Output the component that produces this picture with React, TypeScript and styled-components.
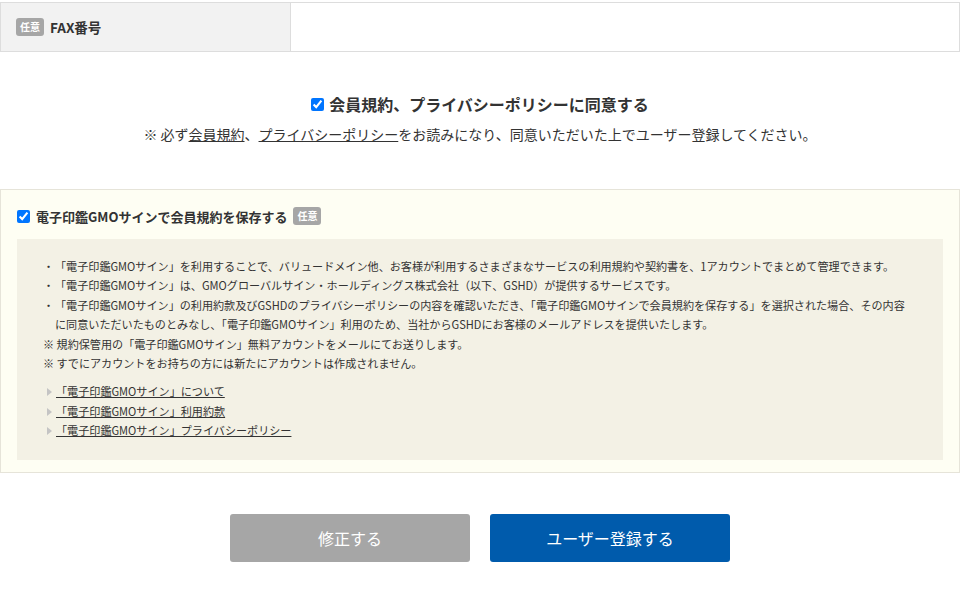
import * as React from "react";
import styled, { createGlobalStyle } from "styled-components";

const GlobalStyle = createGlobalStyle`
  body {
    margin: 0;
    background: #fff;
    color: #333;
    font-family: "Noto Sans CJK JP", "Noto Sans", sans-serif;
  }
  * { box-sizing: border-box; }
`;

const Page = styled.div`
  width: 960px;
  padding-top: 2px;
`;

const FormTable = styled.div`
  display: grid;
  grid-template-columns: 290px 1fr;
  border: 1px solid #ddd;
`;

const LabelCell = styled.div`
  display: flex;
  align-items: center;
  gap: 6px;
  height: 48px;
  padding: 0 15px;
  background: #f2f2f2;
  border-right: 1px solid #ddd;
  font-size: 13.5px;
  font-weight: 700;
`;

const ValueCell = styled.div`
  background: #fff;
`;

const Badge = styled.span`
  display: inline-flex;
  align-items: center;
  justify-content: center;
  height: 18px;
  padding: 0 4px;
  border-radius: 3px;
  background: #a6a6a6;
  color: #fff;
  font-size: 10px;
  font-weight: 700;
  line-height: 1;
`;

const Agreement = styled.div`
  display: flex;
  flex-direction: column;
  align-items: center;
  padding-top: 40px;
`;

const AgreeLabel = styled.label`
  display: flex;
  align-items: center;
  gap: 3px;
  font-size: 16px;
  font-weight: 700;
  line-height: 24px;
`;

const Check = styled.input`
  width: 13px;
  height: 13px;
  margin: 0 2px 0 0;
  accent-color: #0075ff;
`;

const Note = styled.p`
  margin: 8px 0 0;
  font-size: 14px;
  line-height: 20px;

  a {
    color: #333;
    text-decoration: underline;
  }
`;

const SignBox = styled.div`
  margin-top: 45px;
  padding: 14px 16px 12px;
  background: #fefef3;
  border: 1px solid #e6e4d9;
`;

const SignLabel = styled.label`
  display: flex;
  align-items: center;
  gap: 4px;
  height: 24px;
  font-size: 13px;
  font-weight: 700;

  ${Badge} {
    margin-left: 2px;
  }
`;

const InfoPanel = styled.div`
  margin-top: 11px;
  padding: 18px 34px 19px 26px;
  background: #f3f1e5;
  font-size: 11.1px;
  line-height: 19.4px;
`;

const BulletList = styled.ul`
  list-style: none;
  margin: 0;
  padding: 0;
`;

const Bullet = styled.li`
  padding-left: 12px;
  text-indent: -12px;

  &::before {
    content: "・";
    display: inline-block;
    width: 12px;
    text-indent: 0;
  }
`;

const Remark = styled.p`
  margin: 0;
`;

const LinkList = styled.ul`
  list-style: none;
  margin: 9px 0 0;
  padding: 0;
`;

const LinkItem = styled.li`
  display: flex;
  align-items: center;
  padding-left: 4px;

  &::before {
    content: "";
    width: 0;
    height: 0;
    margin-right: 4px;
    border-top: 4px solid transparent;
    border-bottom: 4px solid transparent;
    border-left: 5px solid #c4c4c4;
  }

  a {
    color: #333;
    text-decoration: underline;
  }
`;

const Actions = styled.div`
  display: flex;
  justify-content: center;
  gap: 20px;
  margin-top: 41px;
`;

const ActionButton = styled.button<{ $variant: "back" | "submit" }>`
  width: 240px;
  height: 48px;
  border: none;
  border-radius: 3px;
  background: ${({ $variant }) => ($variant === "submit" ? "#005bac" : "#a6a6a6")};
  color: #fff;
  font-family: inherit;
  font-size: 16px;
  cursor: pointer;
`;

const links = [
  "「電子印鑑GMOサイン」について",
  "「電子印鑑GMOサイン」利用約款",
  "「電子印鑑GMOサイン」プライバシーポリシー",
];

export default function App() {
  return (
    <Page>
      <GlobalStyle />
      <FormTable>
        <LabelCell>
          <Badge>任意</Badge>
          FAX番号
        </LabelCell>
        <ValueCell />
      </FormTable>

      <Agreement>
        <AgreeLabel>
          <Check type="checkbox" defaultChecked />
          会員規約、プライバシーポリシーに同意する
        </AgreeLabel>
        <Note>
          ※ 必ず<a href="#">会員規約</a>、<a href="#">プライバシーポリシー</a>
          をお読みになり、同意いただいた上でユーザー登録してください。
        </Note>
      </Agreement>

      <SignBox>
        <SignLabel>
          <Check type="checkbox" defaultChecked />
          電子印鑑GMOサインで会員規約を保存する
          <Badge>任意</Badge>
        </SignLabel>
        <InfoPanel>
          <BulletList>
            <Bullet>
              「電子印鑑GMOサイン」を利用することで、バリュードメイン他、お客様が利用するさまざまなサービスの利用規約や契約書を、1アカウントでまとめて管理できます。
            </Bullet>
            <Bullet>
              「電子印鑑GMOサイン」は、GMOグローバルサイン・ホールディングス株式会社（以下、GSHD）が提供するサービスです。
            </Bullet>
            <Bullet>
              「電子印鑑GMOサイン」の利用約款及びGSHDのプライバシーポリシーの内容を確認いただき、「電子印鑑GMOサインで会員規約を保存する」を選択された場合、その内容に同意いただいたものとみなし、「電子印鑑GMOサイン」利用のため、当社からGSHDにお客様のメールアドレスを提供いたします。
            </Bullet>
          </BulletList>
          <Remark>※ 規約保管用の「電子印鑑GMOサイン」無料アカウントをメールにてお送りします。</Remark>
          <Remark>※ すでにアカウントをお持ちの方には新たにアカウントは作成されません。</Remark>
          <LinkList>
            {links.map((l) => (
              <LinkItem key={l}>
                <a href="#">{l}</a>
              </LinkItem>
            ))}
          </LinkList>
        </InfoPanel>
      </SignBox>

      <Actions>
        <ActionButton $variant="back">修正する</ActionButton>
        <ActionButton $variant="submit">ユーザー登録する</ActionButton>
      </Actions>
    </Page>
  );
}
